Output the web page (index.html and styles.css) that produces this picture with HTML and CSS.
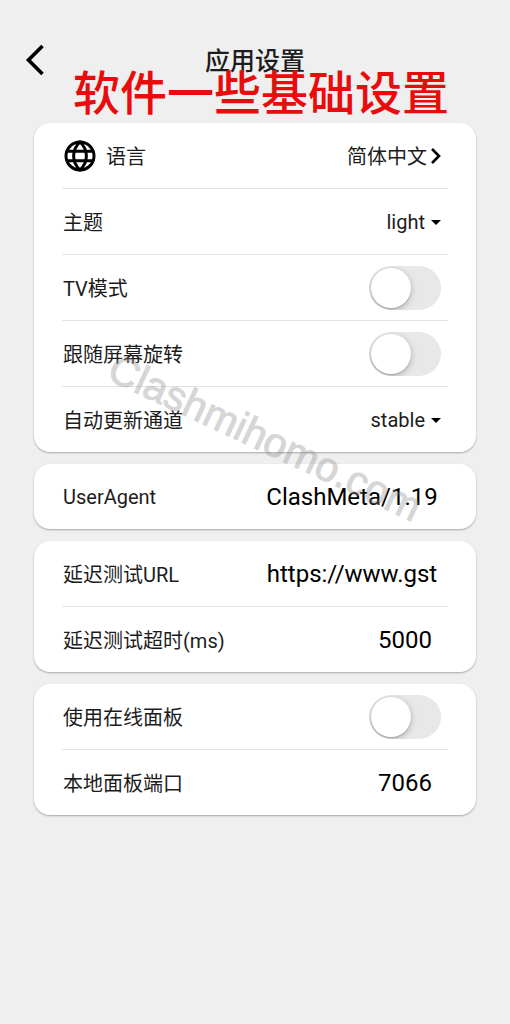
FILE: index.html
```html
<!DOCTYPE html>
<html lang="zh-CN">
<head>
    <meta charset="UTF-8">
    <meta name="viewport" content="width=device-width, initial-scale=1.0">
    <title>应用设置</title>
    <link rel="stylesheet" href="styles.css">
</head>
<body>
    <header class="header">
        <button class="back" type="button" aria-label="返回">
            <svg width="20" height="32" viewBox="0 0 20 32" fill="none" stroke="#000" stroke-width="3.6">
                <path d="M18.5 2 L4.5 16 L18.5 30"/>
            </svg>
        </button>
        <h1 class="title">应用设置</h1>
        <p class="banner">软件一些基础设置</p>
    </header>

    <main class="settings">
        <section class="card">
            <div class="row">
                <span class="label with-icon">
                    <svg width="32" height="32" viewBox="0 0 32 32" fill="none" stroke="#000" stroke-width="3">
                        <circle cx="16" cy="16" r="14"/>
                        <path d="M16 2 C7.5 10 7.5 22 16 30 C24.5 22 24.5 10 16 2 Z"/>
                        <path d="M3 11.3 H29 M3 20.7 H29"/>
                    </svg>
                    语言
                </span>
                <button class="link" type="button">
                    简体中文
                    <svg width="12" height="18" viewBox="0 0 12 18" fill="none" stroke="#000" stroke-width="2.6">
                        <path d="M3 2 L10 9 L3 16"/>
                    </svg>
                </button>
            </div>
            <div class="row">
                <label class="label" for="theme">主题</label>
                <span class="dropdown">
                    <select id="theme">
                        <option selected>light</option>
                        <option>dark</option>
                    </select>
                </span>
            </div>
            <div class="row">
                <label class="label" for="tv-mode">TV模式</label>
                <input class="toggle" type="checkbox" id="tv-mode">
            </div>
            <div class="row">
                <label class="label" for="rotate">跟随屏幕旋转</label>
                <input class="toggle" type="checkbox" id="rotate">
            </div>
            <div class="row">
                <label class="label" for="channel">自动更新通道</label>
                <span class="dropdown">
                    <select id="channel">
                        <option selected>stable</option>
                        <option>beta</option>
                    </select>
                </span>
            </div>
        </section>

        <section class="card">
            <div class="row">
                <label class="label" for="user-agent">UserAgent</label>
                <input class="field" type="text" id="user-agent" value="ClashMeta/1.19">
            </div>
        </section>

        <section class="card">
            <div class="row">
                <label class="label" for="test-url">延迟测试URL</label>
                <input class="field" type="text" id="test-url" value="https://www.gst">
            </div>
            <div class="row">
                <label class="label" for="timeout">延迟测试超时(ms)</label>
                <input class="field short" type="text" inputmode="numeric" id="timeout" value="5000">
            </div>
        </section>

        <section class="card">
            <div class="row">
                <label class="label" for="online-panel">使用在线面板</label>
                <input class="toggle" type="checkbox" id="online-panel">
            </div>
            <div class="row">
                <label class="label" for="panel-port">本地面板端口</label>
                <input class="field short" type="text" inputmode="numeric" id="panel-port" value="7066">
            </div>
        </section>

        <div class="watermark">Clashmihomo.com</div>
    </main>
</body>
</html>
```
FILE: styles.css
```css
* {
    box-sizing: border-box;
}
body {
    margin: 0;
    min-height: 100vh;
    background-color: #efefef;
    color: #1c1c1c;
    font-family: Roboto, "Noto Sans CJK SC", sans-serif;
    font-size: 20px;
}
button, input, select {
    font: inherit;
    color: inherit;
    border: none;
    background: none;
    padding: 0;
    margin: 0;
}
svg {
    display: block;
}

/* Header */
.header {
    position: relative;
    display: grid;
    grid-template-columns: 32px 1fr 32px;
    align-items: center;
    padding: 40px 24px 0;
    height: 80px;
}
.back {
    cursor: pointer;
}
.title {
    margin: 0;
    padding-top: 4px;
    font-size: 25px;
    line-height: 36px;
    font-weight: 500;
    text-align: center;
}
.banner {
    position: absolute;
    top: 66px;
    left: 0;
    right: 0;
    z-index: 1;
    margin: 0;
    padding-left: 12px;
    font-size: 47px;
    line-height: 56px;
    font-weight: 500;
    text-align: center;
    white-space: nowrap;
    color: #e80c0c;
}

/* Cards */
.settings {
    position: relative;
    display: flex;
    flex-direction: column;
    gap: 12px;
    padding: 43px 34px 40px;
}
.card {
    padding: 0 28px;
    background-color: #fff;
    border-radius: 16px;
    box-shadow: 0 1px 2px rgba(0, 0, 0, 0.3);
}
.row {
    display: flex;
    align-items: center;
    justify-content: space-between;
    height: 65px;
    padding: 0 7px 0 1px;
}
.row + .row {
    height: 66px;
    border-top: 1px solid #e2e2e2;
}
.label {
    white-space: nowrap;
}
.with-icon {
    display: flex;
    align-items: center;
    gap: 10px;
    padding-left: 1px;
}
.link {
    display: flex;
    align-items: center;
    gap: 2px;
    cursor: pointer;
}

/* Controls */
.dropdown {
    position: relative;
}
.dropdown select {
    appearance: none;
    padding-right: 16px;
    text-align: right;
    text-align-last: right;
}
.dropdown::after {
    content: "";
    position: absolute;
    right: 0;
    top: 50%;
    margin-top: -2px;
    border: 5px solid transparent;
    border-top-color: #000;
    border-bottom: none;
    pointer-events: none;
}
.toggle {
    appearance: none;
    width: 72px;
    height: 44px;
    padding: 2px;
    border-radius: 22px;
    background-color: #e8e8e8;
    overflow: hidden;
    cursor: pointer;
}
.toggle::before {
    content: "";
    display: block;
    width: 40px;
    height: 40px;
    border-radius: 50%;
    background-color: #fff;
    box-shadow: 0 2px 6px rgba(0, 0, 0, 0.25), 0 1px 1px rgba(0, 0, 0, 0.15);
}
.toggle:checked {
    background-color: #34c759;
}
.toggle:checked::before {
    margin-left: auto;
}
.field {
    width: 178px;
    font-size: 24px;
    text-align: center;
    color: #000;
}
.short {
    width: 72px;
}

.watermark {
    position: absolute;
    top: 329px;
    left: 0;
    right: 0;
    padding-left: 22px;
    font-family: "Liberation Sans", sans-serif;
    font-size: 41px;
    line-height: 48px;
    text-align: center;
    color: #8c8c8c;
    -webkit-text-stroke: 1px #8c8c8c;
    opacity: 0.35;
    transform: rotate(25deg);
    pointer-events: none;
}
```
